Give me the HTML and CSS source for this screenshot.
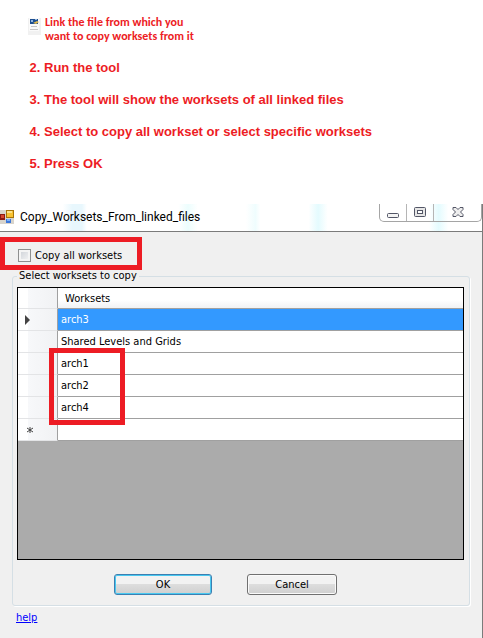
FILE: index.html
```html
<!DOCTYPE html>
<html lang="en">
<head>
<meta charset="UTF-8">
<meta name="viewport" content="width=device-width, initial-scale=1">
<title>Copy Worksets From linked files</title>
<link rel="stylesheet" href="styles.css">
</head>
<body>

<section class="steps">
    <div class="step-link">
        <svg class="file-icon" width="13" height="17" viewBox="0 0 13 17">
            <rect width="13" height="17" fill="#f1f1f1"/>
            <rect x="1" width="10" height="13" fill="#fafafa"/>
            <rect x="2" y="1" width="8" height="5" fill="#1d4f91"/>
            <path d="M3 2h2v2H3zM7 1h2v1H7z" fill="#8fb4dc"/>
            <path d="M5 5l4-2 2 1-3 2z" fill="#e0b94c"/>
            <path d="M3 8.500h6M2 11.500h8" stroke="#c5c5c5"/>
        </svg>
        <p>Link the file from which you<br>want to copy worksets from it</p>
    </div>
    <ol class="step-list" start="2">
        <li>Run the tool</li>
        <li>The tool will show the worksets of all linked files</li>
        <li>Select to copy all workset or select specific worksets</li>
        <li>Press OK</li>
    </ol>
</section>

<main class="window">
    <header class="title-bar">
        <svg class="app-icon" width="14" height="14" viewBox="0 0 14 14">
            <rect width="14" height="14" fill="#d8d4cc"/>
            <rect x="0" y="4" width="5" height="6" fill="#8c1a12"/>
            <rect x="1" y="5" width="3" height="3" fill="#d8452e"/>
            <rect x="6" y="0" width="8" height="8" fill="#a87408"/>
            <rect x="7" y="1" width="6" height="6" fill="#f8c332"/>
            <rect x="7" y="1" width="5" height="2" fill="#fde28a"/>
            <rect x="6" y="9" width="5" height="4" fill="#3c78dc"/>
            <rect x="7" y="9" width="3" height="2" fill="#7fb0f5"/>
        </svg>
        <h1>Copy_Worksets_From_linked_files</h1>
        <div class="window-buttons">
            <button type="button" class="win-btn" aria-label="Minimize">
                <svg width="12" height="12" viewBox="0 0 12 12"><rect x="0.500" y="6.500" width="11" height="4" rx="1" fill="#f4f4f4" stroke="#535666"/></svg>
            </button>
            <button type="button" class="win-btn" aria-label="Maximize">
                <svg width="12" height="12" viewBox="0 0 12 12"><rect x="0.500" y="0.500" width="11" height="9" rx="1" fill="#e6e6e6" stroke="#535666"/><rect x="3.500" y="3.500" width="5" height="3" fill="#fff" stroke="#535666"/></svg>
            </button>
            <button type="button" class="win-btn win-close" aria-label="Close">
                <svg width="12" height="12" viewBox="0 0 12 12"><path d="M1 0.500h3l2 2 2-2h3v2L8.500 5 11 7.500v2H8l-2-2-2 2H1v-2L3.500 5 1 2.500z" fill="#eee" stroke="#535666"/></svg>
            </button>
        </div>
    </header>

    <form class="client">
        <label class="copy-all"><input type="checkbox" name="copyAll">Copy all worksets</label>

        <fieldset class="group">
            <legend>Select worksets to copy</legend>
            <div class="grid">
                <table>
                    <thead>
                        <tr><th class="row-head"></th><th class="col-head">Worksets</th></tr>
                    </thead>
                    <tbody>
                        <tr class="selected">
                            <th class="row-head"><svg width="5" height="10" viewBox="0 0 5 10"><path d="M0 0l5 5-5 5z" fill="#444"/></svg></th>
                            <td>arch3</td>
                        </tr>
                        <tr><th class="row-head"></th><td>Shared Levels and Grids</td></tr>
                        <tr><th class="row-head"></th><td>arch1</td></tr>
                        <tr><th class="row-head"></th><td>arch2</td></tr>
                        <tr><th class="row-head"></th><td>arch4</td></tr>
                        <tr>
                            <th class="row-head new-row"><svg width="6" height="6" viewBox="0 0 6 6"><path d="M3 0v6M0 1l6 4M6 1L0 5" stroke="#444"/></svg></th>
                            <td></td>
                        </tr>
                    </tbody>
                </table>
                <div class="highlight"></div>
            </div>
            <div class="actions">
                <button type="button" class="btn btn-ok">OK</button>
                <button type="button" class="btn">Cancel</button>
            </div>
        </fieldset>

        <a class="help" href="#help">help</a>
    </form>
</main>

</body>
</html>
```

FILE: styles.css
```css
* {
    box-sizing: border-box;
}
body {
    margin: 0;
    background-color: #fff;
    color: #000;
    font-family: Tahoma, "DejaVu Sans Condensed", "Noto Sans", sans-serif;
    font-size: 11px;
}

/* Instructions */
.steps {
    padding: 15px 28px 24px;
    color: #ed1c24;
    font-weight: bold;
}
.step-link {
    display: flex;
    gap: 4px;
}
.file-icon {
    margin-top: 3px;
}
.step-link p {
    margin: 0;
    font-family: Calibri, "Open Sans", sans-serif;
    font-size: 12px;
    line-height: 14px;
}
.step-list {
    margin: 9px 0 0;
    padding: 0 0 0 16px;
    font-family: Arial, "Liberation Sans", sans-serif;
    font-size: 13px;
    line-height: 32px;
}

/* Window frame */
.window {
    border-right: 1px solid #7b7b7b;
    border-bottom: 1px solid #7b7b7b;
}
.title-bar {
    display: flex;
    align-items: flex-start;
    height: 28px;
    border-bottom: 1px solid #7b7b7b;
    background: linear-gradient(90deg, #fff 13%, #e8f7fd 15%, #e8f7fd 17%, #fff 18%, #fff 37%, #ecfdfd 39%, #fff 41%, #fff 51%, #effdfe 53%, #fff 54%, #fff 64%, #e4fbfe 66%, #fff 68%, #fff 89%, #e4fbfe 91%, #fff 93%);
}
.app-icon {
    margin-top: 6px;
}
.title-bar h1 {
    flex: 1;
    margin: 0 0 0 6px;
    font-family: "Segoe UI", Roboto, "Open Sans", sans-serif;
    font-size: 12px;
    font-weight: normal;
    line-height: 26px;
}
.window-buttons {
    display: flex;
    height: 18px;
    border: 1px solid #a5a5a5;
    border-top: none;
    border-radius: 0 0 5px 5px;
}
.win-btn {
    display: flex;
    align-items: center;
    justify-content: center;
    width: 27px;
    padding: 0;
    border: none;
    border-right: 1px solid #b5b5b5;
    background: none;
}
.win-close {
    width: 47px;
    border-right: none;
}

/* Form */
.client {
    padding: 5px 12px 13px;
    background-color: #f0f0f0;
}
.copy-all {
    display: flex;
    align-items: center;
    gap: 4px;
    width: 142px;
    height: 33px;
    margin-left: -12px;
    padding: 4px 0 0 13px;
    border: 5px solid #ed1c24;
}
.copy-all input {
    appearance: none;
    width: 13px;
    height: 13px;
    margin: 0;
    border: 1px solid #8e8f8f;
    background: linear-gradient(135deg, #cbcfd5, #f6f6f6);
    box-shadow: inset 0 0 0 2px #f4f4f4;
}
.group {
    min-width: 0;
    margin: 0;
    padding: 5px 5px 10px 4px;
    border: 1px solid #d5dfe5;
    border-radius: 3px;
    box-shadow: 1px 1px 0 #fff;
}
.group legend {
    padding: 0 2px;
    line-height: 12px;
}
.grid {
    position: relative;
    height: 273px;
    border: 1px solid #000;
    background-color: #ababab;
}
table {
    width: 100%;
    border-spacing: 0;
    table-layout: fixed;
}
th, td {
    height: 22px;
    padding: 0 3px;
    border-bottom: 1px solid #a0a0a0;
    font-weight: normal;
    text-align: left;
    line-height: 13px;
}
td {
    background-color: #fff;
}
thead th {
    height: 21px;
}
.col-head {
    padding-left: 7px;
    background: linear-gradient(#fff 60%, #f1f2f4);
}
.row-head {
    width: 40px;
    padding-left: 7px;
    border-right: 1px solid #a0a0a0;
    border-bottom-color: #e3e4e6;
    background: linear-gradient(90deg, #fff 25%, #f7f8fa 26%, #f1f2f4);
}
.row-head svg {
    display: block;
}
.new-row {
    padding-left: 9px;
}
.selected td {
    background-color: #3399ff;
    color: #fff;
}
.highlight {
    position: absolute;
    top: 60px;
    left: 31px;
    width: 76px;
    height: 77px;
    border: 5px solid #ed1c24;
}
.actions {
    display: flex;
    justify-content: center;
    gap: 35px;
    margin-top: 14px;
    padding-right: 30px;
}
.btn {
    width: 90px;
    height: 21px;
    padding: 0;
    border: 1px solid #707070;
    border-radius: 3px;
    background: linear-gradient(#f2f2f2 48%, #dddddd 50%, #cfcfcf);
    box-shadow: inset 0 0 0 1px #fafafa;
    color: #000;
    font: inherit;
}
.btn-ok {
    width: 98px;
    border-color: #3c7fb1;
    box-shadow: inset 0 0 0 1px #48c8f0;
}
.help {
    display: inline-block;
    margin: 4px 0 0 4px;
    color: #0000ff;
    line-height: 15px;
}
```
